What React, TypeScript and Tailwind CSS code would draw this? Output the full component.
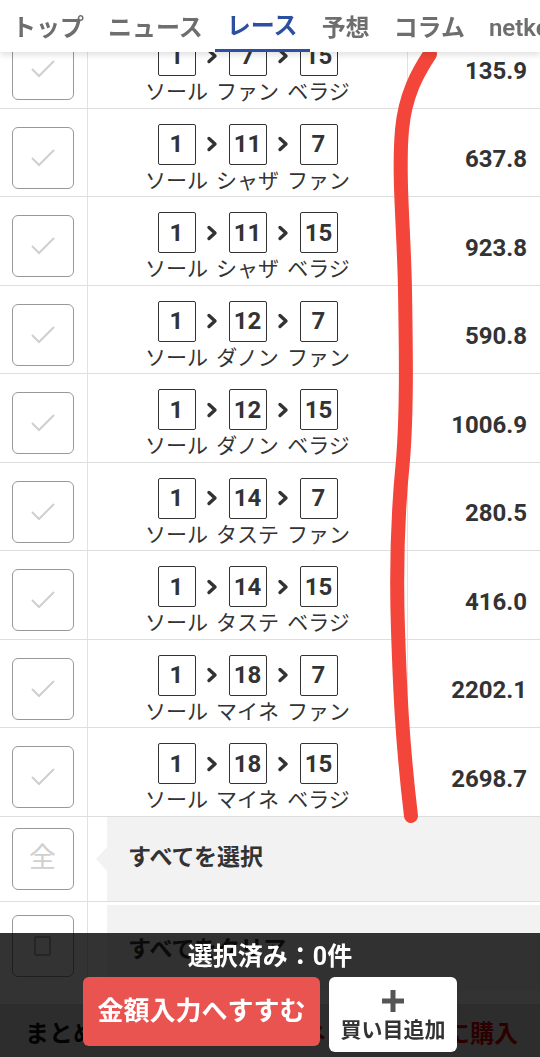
import React from "react";

const rows = [
  { nums: ["1", "7", "15"], names: ["ソール", "ファン", "ベラジ"], odds: "135.9" },
  { nums: ["1", "11", "7"], names: ["ソール", "シャザ", "ファン"], odds: "637.8" },
  { nums: ["1", "11", "15"], names: ["ソール", "シャザ", "ベラジ"], odds: "923.8" },
  { nums: ["1", "12", "7"], names: ["ソール", "ダノン", "ファン"], odds: "590.8" },
  { nums: ["1", "12", "15"], names: ["ソール", "ダノン", "ベラジ"], odds: "1006.9" },
  { nums: ["1", "14", "7"], names: ["ソール", "タステ", "ファン"], odds: "280.5" },
  { nums: ["1", "14", "15"], names: ["ソール", "タステ", "ベラジ"], odds: "416.0" },
  { nums: ["1", "18", "7"], names: ["ソール", "マイネ", "ファン"], odds: "2202.1" },
  { nums: ["1", "18", "15"], names: ["ソール", "マイネ", "ベラジ"], odds: "2698.7" },
];

const tabs = ["トップ", "ニュース", "レース", "予想", "コラム", "netkeiba"];

function Chevron() {
  return (
    <div className="flex w-[33px] justify-center">
      <svg width="12" height="16" viewBox="0 0 12 16">
        <polyline points="3,2.5 9,8 3,13.5" fill="none" stroke="#333" strokeWidth="3.4" strokeLinecap="round" strokeLinejoin="round" />
      </svg>
    </div>
  );
}

function NumBox({ n }: { n: string }) {
  return (
    <div className="flex h-[41px] w-[38px] items-center justify-center rounded-[2px] border-[1.5px] border-[#333] text-[24px] font-bold leading-none text-[#333]">
      {n}
    </div>
  );
}

function CheckBox({ children }: { children?: React.ReactNode }) {
  return (
    <div className="flex h-[62px] w-[62px] items-center justify-center rounded-[6px] border-[1.5px] border-[#999] bg-white">
      {children ?? (
        <svg width="34" height="34" viewBox="0 0 34 34">
          <polyline points="6,17 13,24 28,9" fill="none" stroke="#cfcfcf" strokeWidth="2" />
        </svg>
      )}
    </div>
  );
}

export default function App() {
  return (
    <div className="relative min-h-screen overflow-hidden bg-white font-[Roboto,'Noto_Sans_CJK_JP',sans-serif] text-[#333]">
      <header className="fixed left-0 right-0 top-0 z-20 flex h-[52px] overflow-hidden whitespace-nowrap bg-white shadow-[0_3px_6px_rgba(0,0,0,0.12)]">
        {tabs.map((t) => (
          <div
            key={t}
            className={
              t === "レース"
                ? "flex h-full items-center border-b-[3px] border-[#2c4fa0] px-3 pt-[3px] text-[24px] font-semibold text-[#2c4fa0]"
                : "flex h-full items-center px-3 pt-[3px] text-[24px] font-semibold text-[#6e6e6e]"
            }
          >
            {t}
          </div>
        ))}
      </header>

      <main className="pt-[20px]">
        {rows.map((r, i) => (
          <div key={i} className="grid h-[88.5px] grid-cols-[88px_320px_1fr] border-b border-[#dedede]">
            <div className="flex items-center justify-center border-r border-[#e2e2e2] pr-[2px] pt-[11px]">
              <CheckBox />
            </div>
            <div className="flex flex-col items-center justify-center border-r border-[#e2e2e2] pt-[14px]">
              <div className="flex items-center">
                <NumBox n={r.nums[0]} />
                <Chevron />
                <NumBox n={r.nums[1]} />
                <Chevron />
                <NumBox n={r.nums[2]} />
              </div>
              <div className="mt-[2px] flex">
                {r.names.map((n, j) => (
                  <span key={j} className="w-[71px] text-center text-[21px] leading-[28px] text-[#333]">
                    {n}
                  </span>
                ))}
              </div>
            </div>
            <div className="flex items-center justify-end pr-[13px] pt-[14px] text-[24px] font-bold text-[#333]">
              {r.odds}
            </div>
          </div>
        ))}

        <div className="grid h-[85px] grid-cols-[88px_1fr] border-b border-[#dedede]">
          <div className="flex items-center justify-center border-r border-[#e2e2e2] pr-[2px]">
            <CheckBox>
              <span className="text-[27px] leading-none text-[#d0d0d0]">全</span>
            </CheckBox>
          </div>
          <div className="flex items-stretch pl-[8px]">
            <div className="flex items-center">
              <div className="h-0 w-0 border-y-[12px] border-r-[11px] border-y-transparent border-r-[#f2f2f2]" />
            </div>
            <div className="flex flex-1 items-center bg-[#f2f2f2] pl-[21px] text-[23px] font-bold text-[#333]">
              すべてを選択
            </div>
          </div>
        </div>

        <div className="grid h-[89px] grid-cols-[88px_1fr]">
          <div className="flex items-center justify-center border-r border-[#e2e2e2] pr-[2px]">
            <CheckBox>
              <div className="h-[20px] w-[17px] rounded-[2px] border-[2px] border-[#bbb]" />
            </CheckBox>
          </div>
          <div className="flex items-stretch pl-[8px] pt-[3px]">
            <div className="w-[11px]" />
            <div className="flex flex-1 items-center bg-[#f2f2f2] pl-[21px] pt-[6px] text-[23px] font-bold text-[#333]">
              すべてをクリア
            </div>
          </div>
        </div>

        <div className="h-[13px]" />

        <div className="flex h-[60px] items-center justify-between bg-[#e0e0e0] pl-[25px] pr-[22px] text-[24px] font-bold">
          <span className="text-[#111]">まとめて購入の</span>
          <span className="text-[#d40000]">ネットで簡単に購入</span>
        </div>
      </main>

      <svg className="pointer-events-none absolute left-0 top-0 z-10" width="540" height="1057" viewBox="0 0 540 1057">
        <path
          d="M430 54 C418 72 405 95 402 130 C398 175 404 230 405 290 C406 350 407 410 403 460 C398 510 396 570 398 630 C400 690 402 740 411 816"
          fill="none"
          stroke="#f3453a"
          strokeWidth="14"
          strokeLinecap="round"
          strokeLinejoin="round"
        />
      </svg>

      <div className="fixed bottom-0 left-0 right-0 z-30 flex h-[124px] flex-col items-center bg-black/80 pt-[6px]">
        <div className="text-[25px] font-bold leading-[36px] text-white">選択済み：0件</div>
        <div className="mt-[2px] flex items-start gap-[9px]">
          <button className="flex h-[69px] w-[237px] items-center justify-center rounded-[6px] bg-[#ea5450] text-[26px] font-bold text-white">
            金額入力へすすむ
          </button>
          <button className="flex h-[75px] w-[128px] flex-col items-center justify-center rounded-[6px] bg-white pt-[2px]">
            <svg width="26" height="26" viewBox="0 0 26 26">
              <path d="M13 2 V24 M2 13 H24" stroke="#555" strokeWidth="5" />
            </svg>
            <span className="mt-[3px] text-[21px] font-bold leading-[26px] text-[#333]">買い目追加</span>
          </button>
        </div>
      </div>
    </div>
  );
}
